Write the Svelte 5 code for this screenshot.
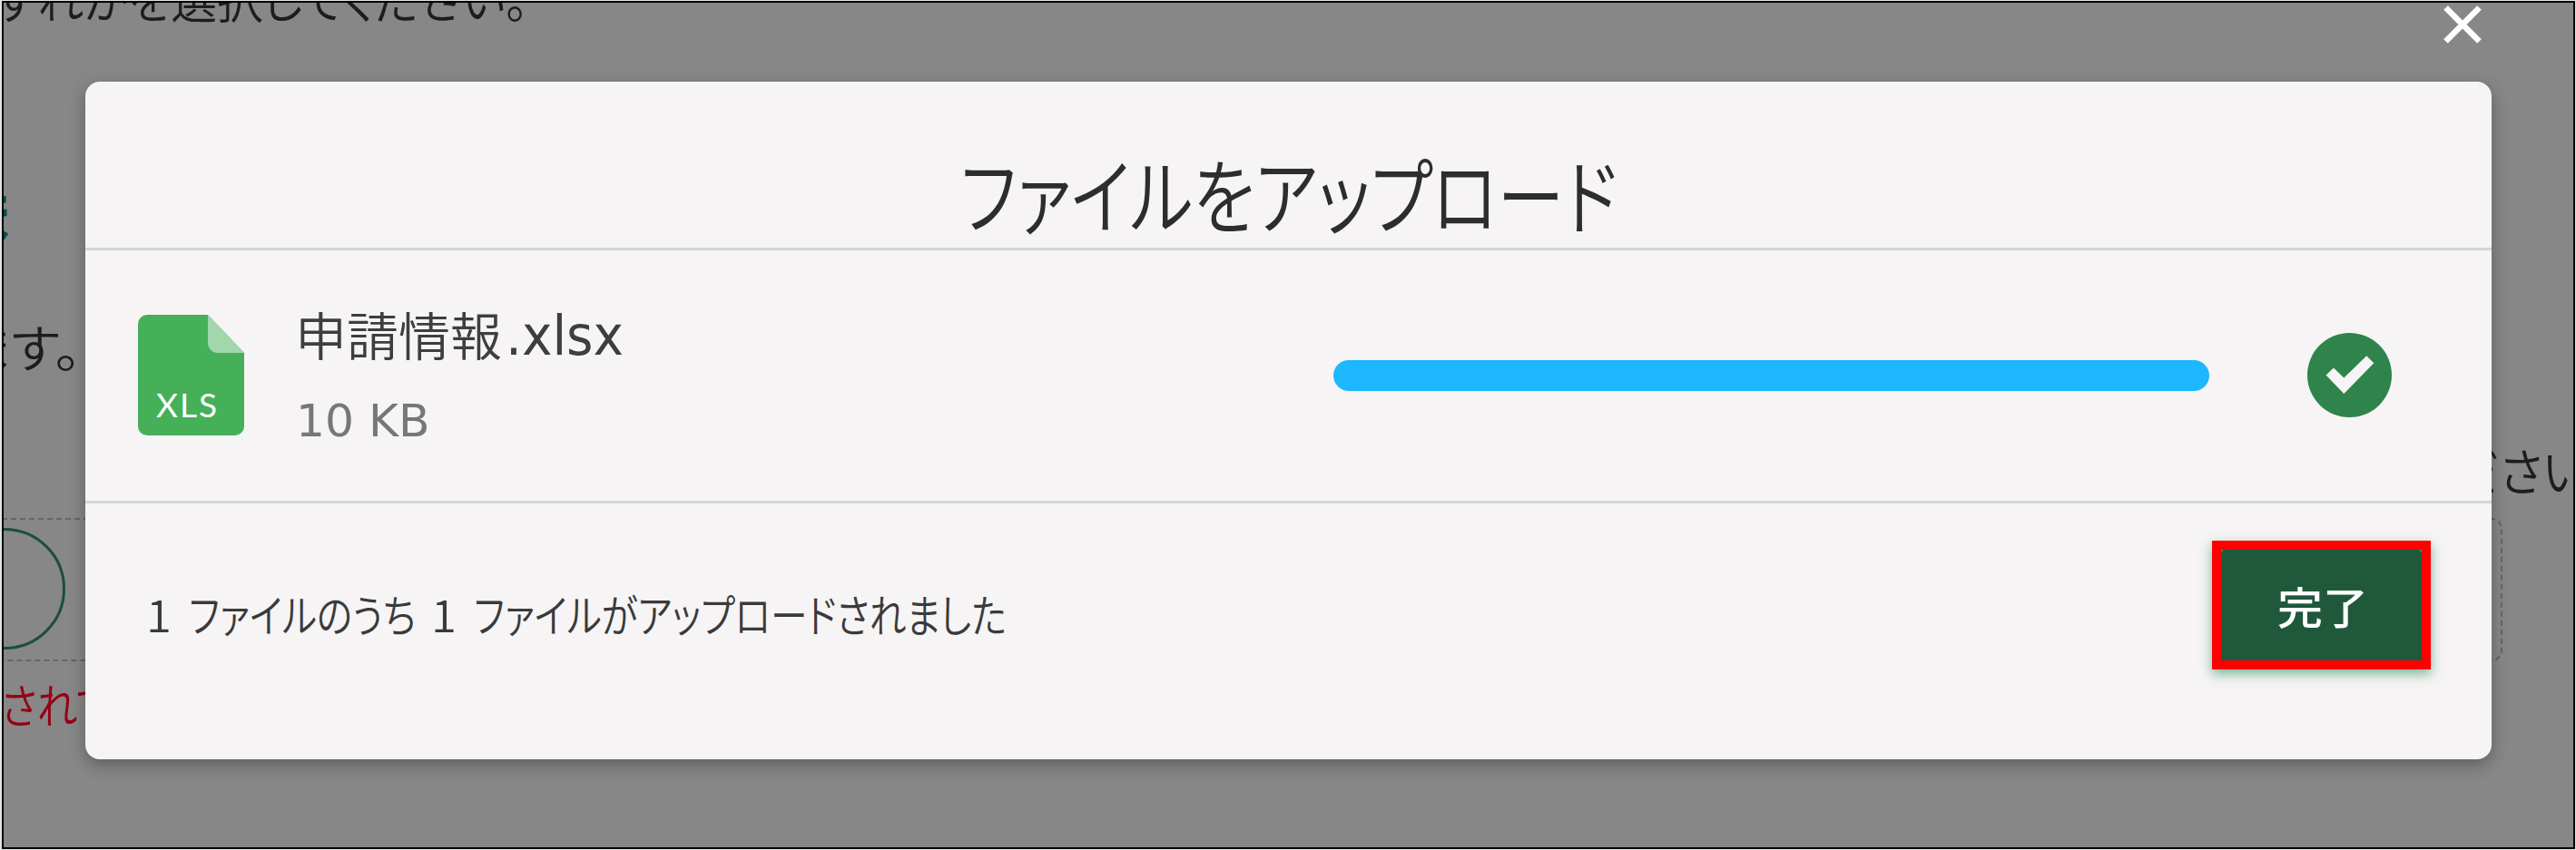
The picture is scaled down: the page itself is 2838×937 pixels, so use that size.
<script>
  const fit = (node, width) => {
    const ratio = width / node.offsetWidth;
    node.style.transform = `scaleX(${ratio})`;
  };
</script>

<div class="screen">
  <div class="page" aria-hidden="true">
    <span class="bg" style="left:-6px;top:-46px"><i use:fit={588}>ずれかを選択してください。</i></span>
    <span class="bg heading" style="left:-52px;top:193px"><i use:fit={66}>ま</i></span>
    <span class="bg" style="left:-42px;top:339px"><i use:fit={132}>ます。</i></span>
    <span class="bg" style="left:2700px;top:475px"><i use:fit={178}>ださい。</i></span>
    <span class="bg error" style="left:1px;top:734px"><i use:fit={124}>されて</i></span>
    <div class="dropzone"></div>
    <div class="pill"></div>
  </div>

  <svg class="close" viewBox="0 0 42 42"><path d="M2.500 2.500L39.500 39.500M39.500 2.500L2.500 39.500" /></svg>

  <section class="modal">
    <header><h1><i use:fit={724}>ファイルをアップロード</i></h1></header>
    <div class="row">
      <svg class="file" viewBox="0 0 117 133">
        <path fill="#46b058" d="M10 0H77L117 42V123a10 10 0 0 1-10 10H10a10 10 0 0 1-10-10V10A10 10 0 0 1 10 0Z" />
        <path fill="#a1d7ab" d="M77 0L117 42H88a11 11 0 0 1-11-11Z" />
        <text x="20" y="113" textLength="67">XLS</text>
      </svg>
      <div class="meta">
        <div class="name"><i use:fit={228}>申請情報</i><i use:fit={130} class="ext">.xlsx</i></div>
        <div class="size"><i use:fit={148}>10 KB</i></div>
      </div>
      <div class="bar"></div>
      <svg class="ok" viewBox="0 0 93 93">
        <circle cx="46.500" cy="46.500" r="46.500" fill="#2e844a" />
        <path fill="#f6f4f5" d="M20.500 46.500L29 38.500L40.300 49.500L65.300 25.300L73.300 33.300L40.300 67Z" />
      </svg>
    </div>
    <footer>
      <p>
        <span style="width:47px"><i use:fit={28}>1</i></span><span style="width:267px"><i use:fit={250}>ファイルのうち</i></span><span style="width:47px"><i use:fit={28}>1</i></span><span style="width:600px"><i use:fit={587}>ファイルがアップロードされました</i></span>
      </p>
      <div class="mark"><button><i use:fit={100}>完了</i></button></div>
    </footer>
  </section>
  <div class="frame"></div>
</div>

<style>
  :global(body) { background: #dfe6e1; overflow: hidden; }
  .screen {
    position: relative; width: 2838px; height: 937px; overflow: hidden; background: #878787;
    font-family: "Noto Sans CJK JP", sans-serif; font-weight: 350; box-sizing: border-box;
    padding: 90px 92px 0 94px; color: #333;
  }
  i { display: inline-block; font-style: normal; transform-origin: 0 50%; white-space: nowrap; font-feature-settings: "palt"; }
  .frame { position: absolute; inset: 1px 1px 1px 2px; border: 2.500px solid #000; outline: 2px solid #dfe6e1; }
  .page { position: absolute; inset: 0; }
  .bg { position: absolute; font-size: 56px; line-height: 84px; color: #1d1d1d; }
  .heading { font-size: 66px; font-weight: 700; color: #0b4c51; }
  .error { color: #960013; font-size: 52px; }
  .dropzone { position: absolute; left: -40px; top: 571px; width: 2793px; height: 154px; border: 2px dashed #666; border-radius: 12px; }
  .pill { position: absolute; left: -200px; top: 582px; width: 266px; height: 128px; border: 3px solid #1c4f36; border-radius: 70px; }
  .close { position: absolute; left: 2692px; top: 6px; width: 42px; height: 42px; }
  .close path { stroke: #fff; stroke-width: 6.600; }
  .modal {
    position: relative; width: 2651px; height: 747px; background: #f6f4f5; border-radius: 16px;
    box-shadow: 0 6px 18px rgba(0, 0, 0, .3); display: flex; flex-direction: column;
  }
  header { height: 183px; border-bottom: 3px solid #d5d6d6; display: flex; justify-content: center; box-sizing: content-box; }
  h1 { margin: 61px 0 0; width: 723px; font-size: 91px; line-height: 120px; font-weight: 350; color: #2d2d2d; }
  .row { height: 276px; border-bottom: 3px solid #d5d6d6; display: flex; padding-left: 58px; }
  .file { width: 117px; height: 133px; margin-top: 71px; }
  .file text { font: 400 37px Lato, sans-serif; fill: #fff; }
  .meta { width: 1144px; margin: 49px 0 0 56px; }
  .name { display: flex; font-size: 57px; line-height: 84px; height: 84px; color: #3e3e3e; }
  .name i:first-child { width: 228px; }
  .ext { margin-left: 4px; font-family: "DejaVu Sans", sans-serif; font-size: 60px; line-height: 90px; font-weight: 400; }
  .size { font: 400 50px/72px "DejaVu Sans", sans-serif; margin: 19px 0 0 1px; color: #777; }
  .bar { width: 965px; height: 34px; margin: 121px 108px 0 0; border-radius: 17px; background: #1cb7ff; }
  .ok { width: 93px; height: 93px; margin-top: 91px; }
  footer { flex: 1; display: flex; justify-content: space-between; }
  p { margin: 83px 0 0 67px; font-size: 49px; line-height: 76px; color: #3a3a3a; display: flex; height: 76px; }
  p span { display: block; }
  .mark { margin: 41px 67px 0 0; width: 221px; height: 122px; border: 10px solid #f00; box-shadow: 0 5px 12px rgba(25, 130, 75, .55); background: #3b8a60; }
  button { width: 100%; height: 100%; border: 0; border-radius: 5px 5px 0 0; background: #1f583b; color: #fff; font: 500 48px/123px "Noto Sans CJK JP", sans-serif; text-align: left; padding: 0 0 0 62px; display: block; }
</style>
